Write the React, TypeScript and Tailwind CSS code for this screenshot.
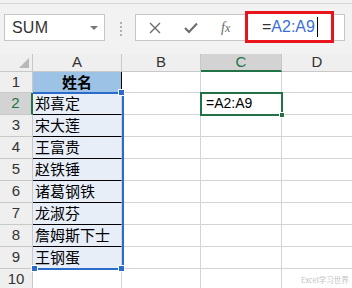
import React from "react";

const names = ["郑喜定", "宋大莲", "王富贵", "赵铁锤", "诸葛钢铁", "龙淑芬", "詹姆斯下士", "王钢蛋"];

const cjk = { fontFamily: '"Noto Sans CJK SC", "Noto Sans", sans-serif' };
const lat = { fontFamily: '"Liberation Sans", Arial, sans-serif' };

export default function App() {
  const rows = Array.from({ length: 10 }, (_, i) => i + 1);
  return (
    <div className="w-[352px] h-[288px] overflow-hidden bg-white relative" style={lat}>
      {/* Toolbar */}
      <div className="h-[54px] bg-[#f2f2f2] pt-[3px] relative">
        <div className="border-t border-[#d6d6d6] h-full flex items-start pt-[10px]">
          <div className="ml-[4px] w-[101px] h-[27px] bg-white border border-[#c6c6c6] flex items-center pl-[7px] pr-[6px]">
            <span className="text-[16px] text-[#333] tracking-[0.2px]">SUM</span>
            <div className="ml-auto w-0 h-0 border-l-[4px] border-r-[4px] border-t-[4px] border-l-transparent border-r-transparent border-t-[#777]" />
          </div>
          <div className="ml-[15px] mt-[8px] flex flex-col gap-[2px]">
            <div className="w-[2px] h-[2px] bg-[#b0b0b0]" />
            <div className="w-[2px] h-[2px] bg-[#b0b0b0]" />
            <div className="w-[2px] h-[2px] bg-[#b0b0b0]" />
            <div className="w-[2px] h-[2px] bg-[#b0b0b0]" />
          </div>
          <div className="ml-[13px] w-[210px] h-[27px] bg-white border border-[#c6c6c6] flex items-center">
            <svg width="12" height="12" viewBox="0 0 12 12" className="ml-[13px]">
              <path d="M1 1 L11 11 M11 1 L1 11" stroke="#6a6a6a" strokeWidth="1.4" />
            </svg>
            <svg width="14" height="12" viewBox="0 0 14 12" className="ml-[23px]">
              <path d="M1 6 L5 10 L13 1.5" stroke="#6a6a6a" strokeWidth="2" fill="none" />
            </svg>
            <span className="ml-[23px] text-[14px] italic text-[#6a6a6a]" style={{ fontFamily: '"Liberation Serif", serif' }}>
              f<span className="text-[12px]">x</span>
            </span>
          </div>
        </div>
        {/* Red highlight box */}
        <div className="absolute left-[245px] top-[11px] w-[89px] h-[32px] border-[3px] border-[#e8131b] bg-white flex items-center pl-[14px]">
          <span className="text-[16px] text-[#333]">=</span>
          <span className="text-[16px] text-[#3a6fd6]">A2:A9</span>
          <div className="ml-[2px] w-[1px] h-[20px] bg-black" />
        </div>
      </div>

      {/* Sheet */}
      <div className="relative">
        {/* Header row */}
        <div className="flex h-[18px]">
          <div className="w-[33px] h-full bg-[#efefef] border-r border-b border-[#c8c8c8] relative">
            <div className="absolute right-[3px] bottom-[3px] w-0 h-0" style={{ borderBottom: "10px solid #b8b8b8", borderLeft: "10px solid transparent" }} />
          </div>
          <div className="w-[89px] h-full bg-[#efefef] border-r border-b border-[#c8c8c8] flex items-center justify-center text-[15px] text-[#333]">A</div>
          <div className="w-[79px] h-full bg-[#efefef] border-r border-b border-[#c8c8c8] flex items-center justify-center text-[15px] text-[#333]">B</div>
          <div className="w-[81px] h-full bg-[#d3d3d3] border-r border-[#c8c8c8] border-b-2 border-b-[#217346] flex items-center justify-center text-[15px] text-[#217346]">C</div>
          <div className="flex-1 h-full bg-[#efefef] border-b border-[#c8c8c8] flex items-center justify-center text-[15px] text-[#333]">D</div>
        </div>
        {rows.map((r) => {
          const h = r === 1 ? "h-[21px]" : "h-[22px]";
          const active = r === 2;
          return (
            <div key={r} className={`flex ${h}`}>
              <div
                className={`w-[33px] h-full border-b border-[#c8c8c8] flex items-center justify-center text-[15px] ${
                  active ? "bg-[#d3d3d3] text-[#217346] border-r-2 border-r-[#217346]" : "bg-[#efefef] text-[#333] border-r border-r-[#c8c8c8]"
                }`}
              >
                {r}
              </div>
              {r === 1 ? (
                <div className="w-[89px] h-full bg-[#9cc3e6] border-r border-b border-black flex items-center justify-center text-[15px] font-bold text-black" style={cjk}>
                  姓名
                </div>
              ) : r <= 9 ? (
                <div className="w-[89px] h-full bg-[#e8eef8] border-r border-r-[#d4d4d4] border-b border-b-black flex items-center pl-[2px] text-[15px] text-black" style={cjk}>
                  {names[r - 2]}
                </div>
              ) : (
                <div className="w-[89px] h-full border-r border-b border-[#d4d4d4]" />
              )}
              <div className="w-[79px] h-full border-r border-b border-[#d4d4d4]" />
              <div className="w-[81px] h-full border-r border-b border-[#d4d4d4] flex items-center pl-[5px] text-[14px] text-black">
                {active ? "=A2:A9" : ""}
              </div>
              <div className="flex-1 h-full border-b border-[#d4d4d4]" />
            </div>
          );
        })}

        {/* Selection A2:A9 */}
        <div className="absolute left-[33px] top-[38px] w-[91px] h-[178px] border-t-2 border-r-2 border-b-2 border-[#2b6ccb] pointer-events-none" />
        <div className="absolute left-[118px] top-[35px] w-[7px] h-[7px] bg-[#2b6ccb] border border-white" />
        <div className="absolute left-[31px] top-[211px] w-[7px] h-[7px] bg-[#2b6ccb] border border-white" />
        <div className="absolute left-[118px] top-[211px] w-[7px] h-[7px] bg-[#2b6ccb] border border-white" />

        {/* Active cell C2 */}
        <div className="absolute left-[200px] top-[38px] w-[83px] h-[24px] border-2 border-[#217346] pointer-events-none" />
        <div className="absolute left-[279px] top-[58px] w-[6px] h-[6px] bg-[#217346] border border-white" />

        {/* Watermark */}
        <div className="absolute left-[301px] top-[222px] text-[7.5px] leading-[8px] text-[#c4c4c4] whitespace-nowrap" style={cjk}>
          Excel学习世界
        </div>
      </div>
    </div>
  );
}
